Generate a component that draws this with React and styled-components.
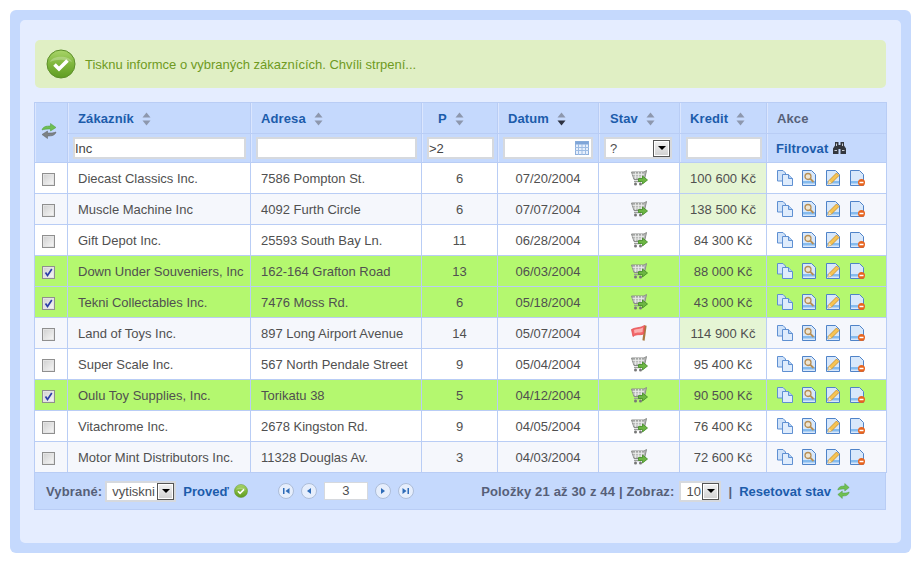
import React from 'react';
import styled, { createGlobalStyle } from 'styled-components';

const GlobalStyle = createGlobalStyle`
  html, body { margin: 0; padding: 0; background: #fff; }
  body { font-family: "Liberation Sans", Arial, sans-serif; font-size: 13px; color: #505050; }
`;

const Frame = styled.div`
  width: 881px;
  margin: 10px 0 0 10px;
  padding: 10px;
  background: #c5d9fd;
  border-radius: 6px;
`;

const Panel = styled.div`
  height: 523px;
  box-sizing: border-box;
  padding: 20px 15px 0 14px;
  background: #e5edff;
  border-radius: 5px;
`;

const Message = styled.div`
  height: 48px;
  margin: 0 0 14px 1px;
  padding-left: 11px;
  display: flex;
  align-items: center;
  gap: 9px;
  background: #e0efc4;
  border-radius: 5px;
  color: #6f9a22;
`;

const Grid = styled.table`
  width: 852px;
  table-layout: fixed;
  border-collapse: collapse;
  font-size: 13px;
`;

const HeadCell = styled.th`
  height: 31px;
  box-sizing: border-box;
  padding: 1px 0 0 ${p => p.$pad ?? 10}px;
  border: 1px solid #b9cdf5;
  background: #c5d9fd;
  box-shadow: inset 1px 0 0 #dbe6fe;
  text-align: left;
  font-weight: bold;
  letter-spacing: 0.12px;
  white-space: nowrap;
  color: ${p => (p.$muted ? '#565f78' : '#1c5cab')};
`;

const HeadInner = styled.span`
  display: inline-flex;
  align-items: center;
  gap: 8px;
`;

const FilterCell = styled.th`
  height: 29px;
  box-sizing: border-box;
  padding: 0 0 0 ${p => p.$pad ?? 5}px;
  border: 1px solid #b9cdf5;
  background: #c5d9fd;
  box-shadow: inset 1px 0 0 #dbe6fe;
  text-align: left;
  font-weight: bold;
  letter-spacing: 0.12px;
  color: #1c5cab;
  vertical-align: middle;
`;

const RefreshCell = styled(FilterCell)`
  padding: 0 5px 0 0;
  text-align: center;
`;

const FilterBox = styled.div`
  position: relative;
  display: flex;
  align-items: center;
  box-sizing: border-box;
  width: ${p => p.$w}px;
  height: ${p => p.$h ?? 22}px;
  background: #fff;
  border: 2px solid #d6d9de;
`;

const TextInput = styled.input`
  flex: 1;
  min-width: 0;
  border: 0;
  outline: 0;
  padding: 0;
  background: transparent;
  font: 13px "Liberation Sans", Arial, sans-serif;
  color: #444;
`;

const CalendarSlot = styled.span`
  position: absolute;
  right: 2px;
  top: 2px;
  display: flex;
`;

const DropValue = styled.span`
  flex: 1;
  overflow: hidden;
  padding-left: ${p => p.$pad ?? 4}px;
  font-weight: normal;
  letter-spacing: 0;
  color: #505050;
  white-space: nowrap;
`;

const DropButton = styled.span`
  flex: none;
  width: 17px;
  height: 17px;
  box-sizing: border-box;
  display: flex;
  align-items: center;
  justify-content: center;
  background: linear-gradient(#f2f2f2, #d0d0d0);
  border: 1px solid #555;
  box-shadow: inset 0 0 0 1px #fff;
`;

const DropArrow = styled.span`
  width: 0;
  height: 0;
  border-left: 4px solid transparent;
  border-right: 4px solid transparent;
  border-top: 4px solid #000;
`;

const FilterLabel = styled.span`
  display: flex;
  align-items: center;
  gap: 5px;
`;

const Row = styled.tr`
  background: ${p => (p.$selected ? '#b4f86f' : p.$tinted ? '#f5f7fc' : '#fff')};
`;

const Cell = styled.td`
  height: 31px;
  box-sizing: border-box;
  padding: 1px 0 0 ${p => (p.$align === 'left' ? 10 : 0)}px;
  border: 1px solid #b9cdf5;
  text-align: ${p => p.$align || 'center'};
  white-space: nowrap;
  overflow: hidden;
  color: #505050;
  ${p => (p.$credit ? 'background: #e5f5d4;' : '')}
`;

const CheckCell = styled(Cell)`
  padding-right: 5px;
`;

const IconCell = styled(Cell)`
  padding-top: 0;
`;

const CheckBox = styled.span`
  display: inline-flex;
  align-items: center;
  justify-content: center;
  width: 13px;
  height: 13px;
  box-sizing: border-box;
  vertical-align: middle;
  border: 1px solid #8f8f8f;
  background: linear-gradient(135deg, #cfcfcf, #f8f8f8);
  box-shadow: inset 0 0 0 1px #e4e4e4;
`;

const StatusIcon = styled.span`
  display: inline-flex;
  vertical-align: middle;
`;

const Actions = styled.div`
  display: flex;
  gap: 8px;
`;

const Footer = styled.div`
  height: 37px;
  box-sizing: border-box;
  width: 852px;
  padding: 0 35px 0 11px;
  display: flex;
  align-items: center;
  background: #c5d9fd;
  border: 1px solid #b9cdf5;
  border-top: 0;
  font-weight: bold;
  color: #565f78;
  letter-spacing: 0.15px;
`;

const FooterLabel = styled.span`
  margin: 0 ${p => p.$right ?? 0}px 0 ${p => p.$left ?? 0}px;
  white-space: nowrap;
`;

const FooterLink = styled.span`
  color: #1c5cab;
  white-space: nowrap;
  letter-spacing: 0;
  margin-left: ${p => p.$left ?? 0}px;
`;

const FooterIcon = styled.span`
  display: flex;
  margin-left: ${p => p.$left ?? 5}px;
`;

const Pager = styled.div`
  display: flex;
  align-items: center;
  gap: 7px;
  margin-left: 30px;
`;

const PageInput = styled.div`
  width: 44px;
  height: 18px;
  box-sizing: border-box;
  border: 1px solid #d6d9de;
  background: #fff;
  text-align: center;
  line-height: 15px;
  font-weight: normal;
  color: #505050;
`;

const Summary = styled.div`
  margin-left: auto;
  display: flex;
  align-items: center;
`;

const customers = [
  { name: 'Diecast Classics Inc.', address: '7586 Pompton St.', count: 6, date: '07/20/2004', credit: '100 600 Kč', over: true },
  { name: 'Muscle Machine Inc', address: '4092 Furth Circle', count: 6, date: '07/07/2004', credit: '138 500 Kč', over: true },
  { name: 'Gift Depot Inc.', address: '25593 South Bay Ln.', count: 11, date: '06/28/2004', credit: '84 300 Kč' },
  { name: 'Down Under Souveniers, Inc', address: '162-164 Grafton Road', count: 13, date: '06/03/2004', credit: '88 000 Kč', selected: true },
  { name: 'Tekni Collectables Inc.', address: '7476 Moss Rd.', count: 6, date: '05/18/2004', credit: '43 000 Kč', selected: true },
  { name: 'Land of Toys Inc.', address: '897 Long Airport Avenue', count: 14, date: '05/07/2004', credit: '114 900 Kč', over: true, flag: true },
  { name: 'Super Scale Inc.', address: '567 North Pendale Street', count: 9, date: '05/04/2004', credit: '95 400 Kč' },
  { name: 'Oulu Toy Supplies, Inc.', address: 'Torikatu 38', count: 5, date: '04/12/2004', credit: '90 500 Kč', selected: true },
  { name: 'Vitachrome Inc.', address: '2678 Kingston Rd.', count: 9, date: '04/05/2004', credit: '76 400 Kč' },
  { name: 'Motor Mint Distributors Inc.', address: '11328 Douglas Av.', count: 3, date: '04/03/2004', credit: '72 600 Kč' },
];

const tintedRows = [1, 5, 9];
const columnWidths = [33, 183, 171, 76, 101, 81, 87, 120];

const SortIcon = ({ active }) => (
  <svg width="9" height="14" viewBox="0 0 9 14">
    <path d="M4.5 0.5L8.5 5.5H0.5Z" fill="#8d97ad" />
    <path d="M4.5 13.5L8.5 8.5H0.5Z" fill={active ? '#2c3140' : '#8d97ad'} />
  </svg>
);

const OkIcon = ({ size = 30 }) => (
  <svg width={size} height={size} viewBox="0 0 30 30">
    <defs>
      <linearGradient id="okFill" x1="0" y1="0" x2="0" y2="1">
        <stop offset="0" stopColor="#a9d56a" />
        <stop offset="0.5" stopColor="#7fb63c" />
        <stop offset="1" stopColor="#5f9c22" />
      </linearGradient>
    </defs>
    <circle cx="15" cy="15" r="14" fill="url(#okFill)" stroke="#5d8f2a" strokeWidth="1" />
    <path d="M4 13C6 6 24 6 26 13C20 10 10 10 4 13Z" fill="#fff" opacity="0.25" />
    <path d="M8.5 15.5L13 20L21.5 11.5" fill="none" stroke="#fff" strokeWidth="3.6" />
  </svg>
);

const RefreshIcon = ({ muted, width = 16 }) => (
  <svg width={width} height="16" viewBox="0 0 16 16" preserveAspectRatio="none">
    <path d="M1 7C2 3.5 5 3 9.5 3V0.5L15 4.5L9.5 8V6C6 6 3.5 6 1 7Z" fill="#6fbf52" stroke="#4c9a3a" strokeWidth="0.5" />
    <path d="M15 9C14 12.500 11 13 6.500 13V15.500L1 11.500L6.500 8V10C10 10 12.500 10 15 9Z" fill={muted ? '#6fbf52' : '#7d8285'} stroke={muted ? '#4c9a3a' : '#5c6063'} strokeWidth="0.5" />
  </svg>
);

const CalendarIcon = () => (
  <svg width="14" height="14" viewBox="0 0 14 14">
    <rect x="0.5" y="0.5" width="13" height="13" fill="#e6effc" stroke="#8fb0dc" />
    <rect x="0.5" y="0.5" width="13" height="3" fill="#7fa5d8" />
    <path d="M0 6.500H14M0 9.500H14M3.500 3V14M7 3V14M10.500 3V14" stroke="#9dbce4" strokeWidth="1" />
  </svg>
);

const BinocularsIcon = () => (
  <svg width="13" height="12" viewBox="0 0 13 12">
    <path d="M2 0H5.500V3H7.500V0H11V3.500L13 6.500V12H7.500V7H5.500V12H0V6.500L2 3.500Z" fill="#33373e" />
    <path d="M1.500 8H4V9H1.500ZM9 8H11.500V9H9ZM3 1.500H4V4H3ZM9 1.500H10V4H9Z" fill="#c9ccd2" />
  </svg>
);

const CartIcon = () => (
  <svg width="17" height="16" viewBox="0 0 17 16">
    <path d="M0.500 2H13L15.500 0.500L13.500 9.500H3Z" fill="#b9bbb9" stroke="#8a8c8a" strokeWidth="1" />
    <path d="M1.500 4.500H13M2.500 7H12.500M4.500 2V9M7.500 2V9M10.500 2V9" stroke="#eceeec" strokeWidth="0.8" />
    <path d="M3 11.500H10" stroke="#9a9c9a" strokeWidth="1.500" />
    <circle cx="4.500" cy="14" r="1.500" fill="#777" />
    <circle cx="9.500" cy="14" r="1.500" fill="#777" />
    <path d="M7.500 8.500H11.500V6L16.500 10L11.500 14V11.500H7.500Z" fill="#6cb543" stroke="#3f8a22" strokeWidth="0.8" />
  </svg>
);

const FlagIcon = () => (
  <svg width="17" height="16" viewBox="0 0 17 16">
    <path d="M14.500 0.500L12.500 15.500" stroke="#a9793f" strokeWidth="2.200" />
    <path d="M0.500 4.500C5 2 9 3.500 13.500 0.500L12.500 9C9 10.500 6 8.500 2 11.500Z" fill="#f2686a" stroke="#e64c4f" strokeWidth="0.8" />
    <path d="M3 5C6 3.500 9 4.500 12 2.500L11.500 7C9 8 6 6.500 3.500 8.500Z" fill="#fbb0b0" />
  </svg>
);

const CopyIcon = () => (
  <svg width="16" height="16" viewBox="0 0 16 16">
    <path d="M0.500 0.500H6L8.500 3V11H0.500Z" fill="#cfe2f9" stroke="#5f90d2" />
    <path d="M5.500 4.500H11.500L15.500 8.500V15.500H5.500Z" fill="#dfecfc" stroke="#5f90d2" />
    <path d="M11.500 4.500V8.500H15.500" fill="#b4d0f2" stroke="#5f90d2" />
  </svg>
);

const DocBase = ({ children }) => (
  <svg width="16" height="16" viewBox="0 0 16 16">
    <path d="M1.500 0.500H10.500L14.500 4.500V15.500H1.500Z" fill="#d8e8fb" stroke="#4f83c8" />
    <path d="M2 11H14V13.500H2Z" fill="#85bbee" />
    {children}
  </svg>
);

const ViewIcon = () => (
  <DocBase>
    <circle cx="7" cy="6.500" r="3" fill="#eee6d4" stroke="#b78f55" strokeWidth="1.300" />
    <path d="M9.200 8.700L12.500 12" stroke="#b78f55" strokeWidth="1.800" />
  </DocBase>
);

const EditIcon = () => (
  <DocBase>
    <path d="M3 14L4 10.500L11.500 3L14 5.500L6.500 13Z" fill="#f6c453" stroke="#c68a26" strokeWidth="0.800" />
    <path d="M3 14L4 10.500L6.500 13Z" fill="#f4e3c0" />
  </DocBase>
);

const DeleteIcon = () => (
  <DocBase>
    <circle cx="12.500" cy="12.500" r="3.500" fill="#e8641e" />
    <path d="M10.500 12.500H14.500" stroke="#fff" strokeWidth="1.500" />
  </DocBase>
);

const PagerIcon = ({ type }) => {
  const glyphs = {
    first: 'M5 5H6.500V11H5ZM11.500 5V11L7.500 8Z',
    prev: 'M10 5V11L6 8Z',
    next: 'M6 5V11L10 8Z',
    last: 'M11 5H9.500V11H11ZM4.500 5V11L8.500 8Z',
  };
  return (
    <svg width="16" height="16" viewBox="0 0 16 16">
      <circle cx="8" cy="8" r="7.500" fill="#e6eefc" stroke="#adbdd8" />
      <path d={glyphs[type]} fill="#2f6cb8" />
    </svg>
  );
};

const Checkbox = ({ checked }) => (
  <CheckBox>
    {checked && (
      <svg width="9" height="9" viewBox="0 0 9 9">
        <path d="M1.500 4.500L3.500 7.500L7.800 1" fill="none" stroke="#2c3fa8" strokeWidth="1.700" />
      </svg>
    )}
  </CheckBox>
);

const Dropdown = ({ value, width, height, pad }) => (
  <FilterBox $w={width} $h={height}>
    <DropValue $pad={pad}>{value}</DropValue>
    <DropButton><DropArrow /></DropButton>
  </FilterBox>
);

const SortHead = ({ label, pad, active }) => (
  <HeadCell $pad={pad}>
    <HeadInner>{label}<SortIcon active={active} /></HeadInner>
  </HeadCell>
);

const App = () => (
  <>
    <GlobalStyle />
    <Frame>
      <Panel>
        <Message>
          <OkIcon />
          Tisknu informce o vybraných zákaznících. Chvíli strpení...
        </Message>
        <Grid>
          <colgroup>
            {columnWidths.map((w, i) => <col key={i} width={w} />)}
          </colgroup>
          <thead>
            <tr>
              <RefreshCell rowSpan={2}><RefreshIcon /></RefreshCell>
              <SortHead label="Zákazník" />
              <SortHead label="Adresa" />
              <SortHead label="P" pad={16} />
              <SortHead label="Datum" active />
              <SortHead label="Stav" pad={11} />
              <SortHead label="Kredit" />
              <HeadCell $muted>Akce</HeadCell>
            </tr>
            <tr>
              <FilterCell><FilterBox $w={173}><TextInput readOnly value="Inc" /></FilterBox></FilterCell>
              <FilterCell><FilterBox $w={161}><TextInput readOnly value="" /></FilterBox></FilterCell>
              <FilterCell><FilterBox $w={67}><TextInput readOnly value=">2" /></FilterBox></FilterCell>
              <FilterCell>
                <FilterBox $w={90}>
                  <TextInput readOnly value="" />
                  <CalendarSlot><CalendarIcon /></CalendarSlot>
                </FilterBox>
              </FilterCell>
              <FilterCell><Dropdown value="?" width={68} /></FilterCell>
              <FilterCell $pad={6}><FilterBox $w={76}><TextInput readOnly value="" /></FilterBox></FilterCell>
              <FilterCell $pad={9}>
                <FilterLabel>Filtrovat<BinocularsIcon /></FilterLabel>
              </FilterCell>
            </tr>
          </thead>
          <tbody>
            {customers.map((c, i) => (
              <Row key={c.name} $selected={c.selected} $tinted={tintedRows.includes(i)}>
                <CheckCell><Checkbox checked={c.selected} /></CheckCell>
                <Cell $align="left">{c.name}</Cell>
                <Cell $align="left">{c.address}</Cell>
                <Cell>{c.count}</Cell>
                <Cell>{c.date}</Cell>
                <IconCell><StatusIcon>{c.flag ? <FlagIcon /> : <CartIcon />}</StatusIcon></IconCell>
                <Cell $credit={c.over}>{c.credit}</Cell>
                <IconCell $align="left">
                  <Actions>
                    <CopyIcon />
                    <ViewIcon />
                    <EditIcon />
                    <DeleteIcon />
                  </Actions>
                </IconCell>
              </Row>
            ))}
          </tbody>
        </Grid>
        <Footer>
          <FooterLabel $right={3}>Vybrané:</FooterLabel>
          <Dropdown value="vytiskni" width={71} height={21} pad={5} />
          <FooterLink $left={7}>Proveď</FooterLink>
          <FooterIcon><OkIcon size={14} /></FooterIcon>
          <Pager>
            <PagerIcon type="first" />
            <PagerIcon type="prev" />
            <PageInput>3</PageInput>
            <PagerIcon type="next" />
            <PagerIcon type="last" />
          </Pager>
          <Summary>
            <FooterLabel $right={5}>Položky 21 až 30 z 44 | Zobraz:</FooterLabel>
            <Dropdown value="10" width={42} height={21} pad={5} />
            <FooterLabel $left={7} $right={7}>|</FooterLabel>
            <FooterLink>Resetovat stav</FooterLink>
            <FooterIcon $left={6}><RefreshIcon muted width={13} /></FooterIcon>
          </Summary>
        </Footer>
      </Panel>
    </Frame>
  </>
);

export default App;
